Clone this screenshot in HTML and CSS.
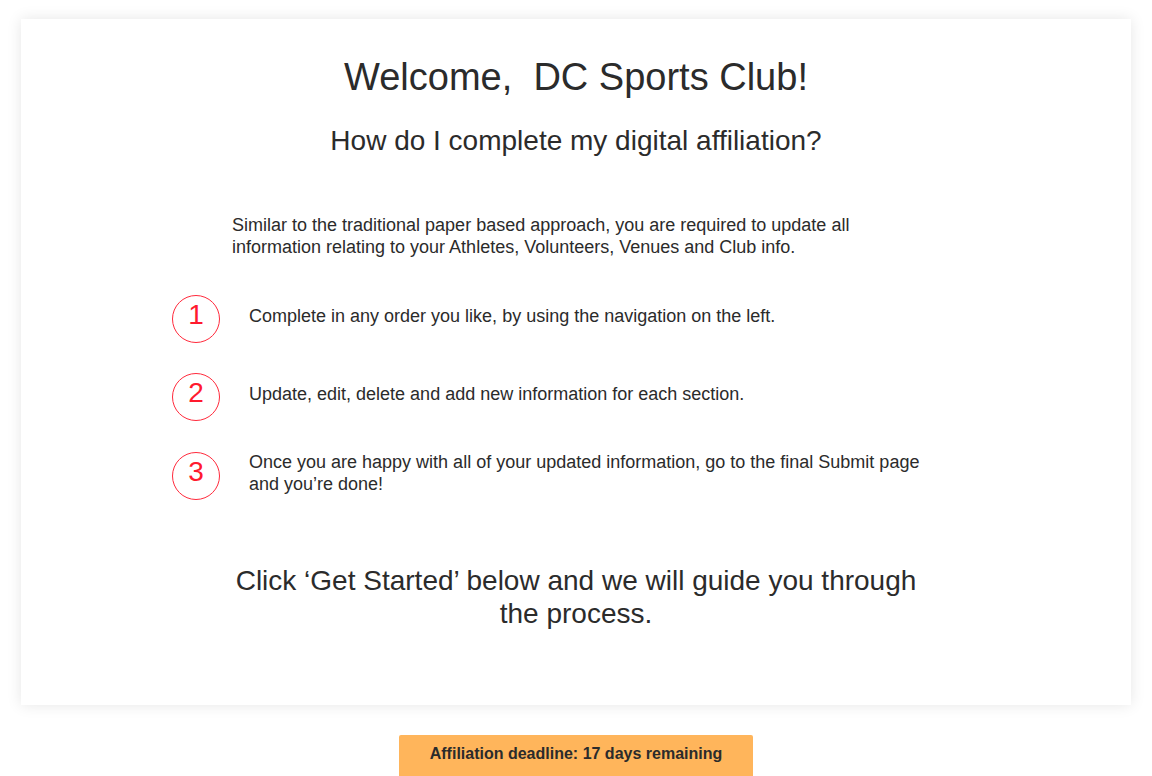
FILE: index.html
```html
<!DOCTYPE html>
<html lang="en">
<head>
<meta charset="utf-8">
<title>Welcome</title>
<link rel="stylesheet" href="styles.css">
</head>
<body>
<main class="page">
  <section class="card">
    <h1 class="title">Welcome,&nbsp; DC Sports Club!</h1>
    <h2 class="subtitle">How do I complete my digital affiliation?</h2>
    <p class="intro">Similar to the traditional paper based approach, you are required to update all information relating to your Athletes, Volunteers, Venues and Club info.</p>
    <ol class="steps">
      <li class="step"><span class="num">1</span><span class="step-text">Complete in any order you like, by using the navigation on the left.</span></li>
      <li class="step"><span class="num">2</span><span class="step-text">Update, edit, delete and add new information for each section.</span></li>
      <li class="step"><span class="num">3</span><span class="step-text">Once you are happy with all of your updated information, go to the final Submit page and you’re done!</span></li>
    </ol>
    <p class="cta">Click ‘Get Started’ below and we will guide you through the process.</p>
  </section>
  <div class="deadline">Affiliation deadline: 17 days remaining</div>
</main>
</body>
</html>
```

FILE: styles.css
```css
html, body {
  margin: 0;
  padding: 0;
  background: #ffffff;
}
body {
  font-family: "Liberation Sans", Arial, Helvetica, sans-serif;
  color: #2b2b2b;
}
.page {
  display: flex;
  flex-direction: column;
  align-items: center;
  padding-top: 19px;
}
.card {
  width: 1110px;
  height: 686px;
  box-sizing: border-box;
  background: #ffffff;
  box-shadow: 0 0 14px rgba(0, 0, 0, 0.1);
  display: flex;
  flex-direction: column;
  padding-top: 35px;
}
.title {
  margin: 0;
  font-weight: 400;
  font-size: 38px;
  line-height: 46px;
  text-align: center;
}
.subtitle {
  margin: 24px 0 0;
  font-weight: 400;
  font-size: 28px;
  line-height: 34px;
  text-align: center;
}
.intro {
  margin: 56px 0 0 211px;
  width: 690px;
  font-size: 18px;
  line-height: 22px;
}
.steps {
  list-style: none;
  margin: 37px 0 0 151px;
  padding: 0;
  display: flex;
  flex-direction: column;
  gap: 30px;
}
.step {
  display: flex;
  align-items: center;
  gap: 29px;
}
.num {
  flex: none;
  width: 46px;
  height: 46px;
  border: 1px solid #ff2a3c;
  border-radius: 50%;
  color: #ff1a2e;
  font-size: 28px;
  line-height: 37px;
  text-align: center;
}
.step-text {
  width: 690px;
  font-size: 18px;
  line-height: 22px;
  padding-bottom: 6px;
}
.cta {
  margin: 63px auto 0;
  width: 700px;
  font-size: 28px;
  line-height: 33px;
  text-align: center;
}
.deadline {
  margin-top: 30px;
  width: 354px;
  height: 60px;
  box-sizing: border-box;
  background: #ffb55b;
  border-radius: 2px;
  font-size: 16px;
  font-weight: 700;
  text-align: center;
  padding-top: 10px;
  color: #2b2b2b;
}
```
